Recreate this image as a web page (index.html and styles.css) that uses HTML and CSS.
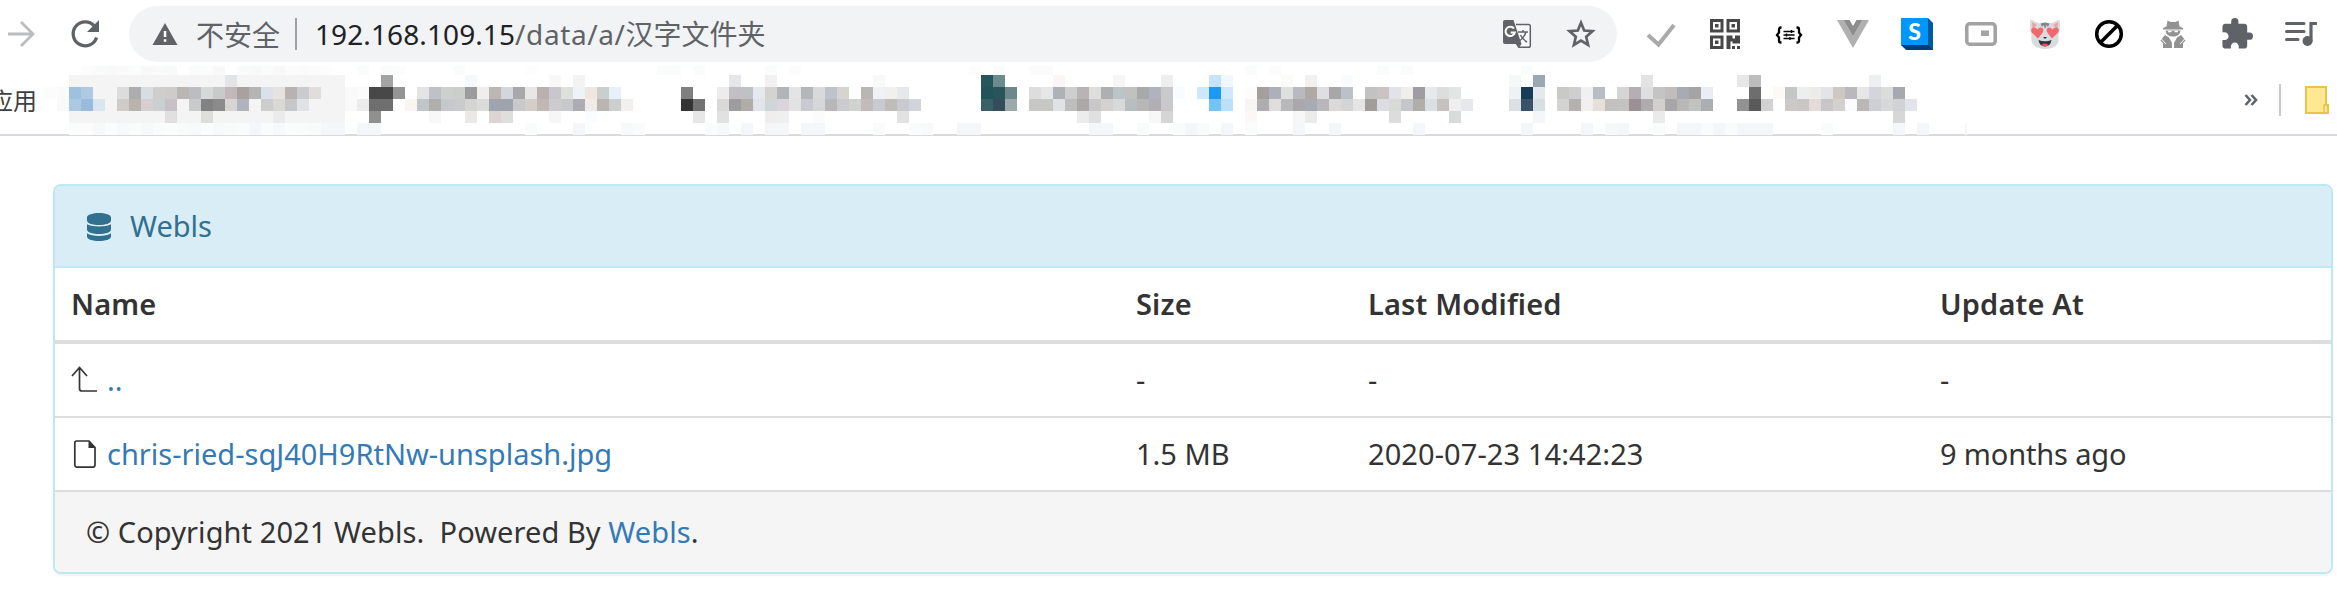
FILE: index.html
```html
<!DOCTYPE html>
<html lang="zh-CN">
<head>
<meta charset="utf-8">
<title>Webls</title>
<link rel="stylesheet" href="styles.css">
</head>
<body>
<header class="toolbar">
  <svg class="icon nav-forward" viewBox="0 0 32 32"><path d="M3 16H27M16 4L28 16L16 28" fill="none" stroke="#babcbe" stroke-width="2.8"/></svg>
  <svg class="icon nav-reload" viewBox="0 0 32 32"><path d="M25.6 8.4A12 12 0 1 0 27.6 19.5" fill="none" stroke="#5f6368" stroke-width="3.3"/><path d="M30 2V14H18Z" fill="#5f6368"/></svg>
  <div class="omnibox">
    <svg class="warn" viewBox="0 0 26 24"><path d="M13 1L25.5 23H.5Z" fill="#5f6368"/><path d="M11.8 9h2.5v6h-2.5zM11.8 17.2h2.5v2.6h-2.5z" fill="#fff"/></svg>
    <span class="insecure">不安全</span>
    <span class="divider"></span>
    <span class="url"><span class="host">192.168.109.15</span><span class="path">/data/a/</span>汉字文件夹</span>
    <svg class="icon translate" viewBox="0 0 32 32"><path d="M15 6.5H27.5Q29.3 6.5 29.3 8.300V27.500Q29.300 29.300 27.500 29.300H18L15 25" fill="#f8f9fa" stroke="#5f6368" stroke-width="1.500"/><path d="M4 2H12.500L20.500 26H4Q2 26 2 24V4Q2 2 4 2Z" fill="#5f6368"/><path d="M15.500 26H20.500L17.500 30Z" fill="#5f6368"/><path d="M13 10.500A4.700 4.700 0 1 0 13.800 14.500H9.700" fill="none" stroke="#fff" stroke-width="2"/><path d="M17 14H27M22 12V14M25 14Q23 20 18.500 23M19.500 17Q22 22 26 24" fill="none" stroke="#5f6368" stroke-width="1.500"/></svg>
    <svg class="icon" viewBox="0 0 32 32"><path d="M16 4.800L19.200 12.500L27.500 13.200L21.200 18.700L23.100 27L16 22.600L8.900 27L10.800 18.700L4.500 13.200L12.800 12.500Z" fill="none" stroke="#5f6368" stroke-width="2.700"/></svg>
  </div>
  <div class="extensions">
    <svg class="icon" viewBox="0 0 32 32"><path d="M3 17L13.500 26.500L29 7" fill="none" stroke="#a9a9a9" stroke-width="4"/></svg>
    <svg class="icon" viewBox="0 0 32 32"><path d="M2.500 2.500h10.500v10.500h-10.500zM19 2.500h10.500v10.500h-10.500zM2.500 19h10.500v10.500h-10.500z" fill="none" stroke="#484848" stroke-width="3"/><path d="M6 6h3.500v3.500h-3.500zM22.500 6h3.500v3.500h-3.500zM6 22.500h3.500v3.500h-3.500zM17.500 17.500h6v3h2.500v-3h5v8h-7.500v-2h-2v7.500h-4zM23 28h3v3h-3zM28 28h3v3h-3z" fill="#484848"/></svg>
    <svg class="icon" viewBox="0 0 32 32"><path d="M8.500 9.500H7.800Q6 9.500 6 11.500V14.500L4 17L6 19.500V22.500Q6 24.500 7.800 24.500H8.500M23.500 9.500H24.200Q26 9.500 26 11.500V14.500L28 17L26 19.500V22.500Q26 24.500 24.200 24.500H23.500" fill="none" stroke="#000" stroke-width="2.300"/><path d="M10.500 13.500H21.500M10.500 17H21.500M10.500 20.500H21.500M18.500 12V15M13.500 15.500V18.500M17 19V22" stroke="#000" stroke-width="1.400"/></svg>
    <svg class="icon" viewBox="0 0 32 32"><path d="M0 2H6.500L16 18.500L25.500 2H32L16 30Z" fill="#b0b0b0"/><path d="M6.500 2H12.500L16 8L19.500 2H25.500L16 18.500Z" fill="#8d8d8d"/></svg>
    <svg class="icon" viewBox="0 0 32 32"><path d="M27 0L32 5V32H5.500L0 27Z" fill="#005a9c"/><path d="M0 27L5.500 32H32L27 27Z" fill="#003d74"/><path d="M0 0H27V27H0Z" fill="#0096ff"/><text class="badge-letter" x="13.500" y="21.500" text-anchor="middle">S</text></svg>
    <svg class="icon" viewBox="0 0 32 32"><rect x="1.800" y="5.800" width="28.400" height="20.400" rx="3" fill="none" stroke="#a2a2a2" stroke-width="3.500"/><rect x="16" y="12.500" width="8" height="5.500" fill="#a2a2a2"/></svg>
    <svg class="icon" viewBox="0 0 32 32"><path d="M1.500 1.500L10.500 5.500Q16 3.500 21.500 5.500L30.500 1.500Q32 9 29.500 17Q31.500 31 16 31Q.5 31 2.500 17Q0 9 1.500 1.500Z" fill="#d9dcdf"/><path d="M3 4L8 7L3.500 11ZM29 4L24 7L28.500 11Z" fill="#f0a0a4"/><path d="M11.500 5.500L16 4.500L20.500 5.500L19 9L17.500 7L16 11L14.500 7L13 9Z" fill="#80868c"/><path d="M9 20.500L2.800 14.500Q.8 10.500 4.500 9.500Q7.200 9.200 8.500 11.500Q10.500 8.500 13.500 10Q15.500 12.500 13 15.500ZM23 20.500L29.200 14.500Q31.200 10.500 27.500 9.500Q24.800 9.200 23.500 11.500Q21.500 8.500 18.500 10Q16.500 12.500 19 15.500Z" fill="#f4676b"/><path d="M14 19H18L16 21Z" fill="#333"/><path d="M9.500 22Q16 24.500 22.500 22Q21.500 28.500 16 28.500Q10.500 28.500 9.500 22Z" fill="#34343b"/><path d="M12 27Q16 24 20 27Q16 29.500 12 27Z" fill="#f34d60"/></svg>
    <svg class="icon" viewBox="0 0 32 32"><circle cx="16" cy="16" r="12.300" fill="none" stroke="#000" stroke-width="3.500"/><path d="M7.500 24.500L24.500 7.500" stroke="#000" stroke-width="3.500"/></svg>
    <svg class="icon" viewBox="0 0 32 32"><path d="M10.500 2.500L13.500 4H18.500L21.500 2.500L22.500 8.500L26 10V11.500H6V10L9.500 8.500ZM8.500 12.500H23.500Q23 18.500 16 18.500Q9 18.500 8.500 12.500Z" fill="#929292"/><path d="M11 12.800h3.500v1.500h-3.500zM17.500 12.800h3.500v1.500h-3.500z" fill="#fff"/><path d="M8 17L12 19.500L15 25V30H6V25L3.500 22.500ZM24 17L20 19.500L17 25V30H26V25L28.500 22.500Z" fill="#929292"/><path d="M3.500 20L9 26M28.500 20L23 26" stroke="#fff"/></svg>
    <svg class="icon" viewBox="1 1 22 22"><path fill="#5f6368" d="M20.500 11H19V7c0-1.100-.9-2-2-2h-4V3.500a2.500 2.500 0 0 0-5 0V5H4c-1.100 0-1.990.9-1.990 2v3.800H3.500c1.490 0 2.700 1.210 2.700 2.700s-1.210 2.700-2.700 2.700H2V20c0 1.100.9 2 2 2h3.800v-1.500c0-1.490 1.210-2.700 2.700-2.700 1.490 0 2.700 1.210 2.700 2.700V22H17c1.100 0 2-.9 2-2v-4h1.500a2.500 2.500 0 0 0 0-5z"/></svg>
    <svg class="icon" viewBox="0 0 32 32"><path d="M1.500 5.500H19M1.500 13.500H19M1.500 21.500H13" stroke="#5f6368" stroke-width="3" stroke-linecap="round"/><path d="M31 5.500H26V23" fill="none" stroke="#5f6368" stroke-width="3.200" stroke-linecap="round"/><circle cx="22.500" cy="23" r="5" fill="#5f6368"/></svg>
  </div>
</header>
<nav class="bookmarks">
  <span class="apps">应用</span>
  <svg class="mosaic" id="mosaic" viewBox="45 66 1922 69" shape-rendering="crispEdges"></svg>
  <svg class="more" viewBox="0 0 14 12"><path d="M1.500 1L6 6L1.500 11M7.500 1L12 6L7.500 11" fill="none" stroke="#5f6368" stroke-width="2.600"/></svg>
  <span class="divider"></span>
  <svg class="folder" viewBox="0 0 24 28"><path d="M1 1H21V19H23V27H1Z" fill="#ffe793" stroke="#e8c548" stroke-width="2"/><path d="M19 27V19H22" fill="none" stroke="#e8c548" stroke-width="1.500"/></svg>
</nav>
<main class="panel">
  <div class="panel-heading">
    <svg class="database" viewBox="0 0 24 28"><path d="M0 4.500C0 -1.500 24 -1.500 24 4.500V7.500C24 13.500 0 13.500 0 7.500ZM0 11.300C5 14.300 19 14.300 24 11.300V16.500C24 22.500 0 22.500 0 16.500ZM0 20.300C5 23.900 19 23.900 24 20.300V23.500C24 29.500 0 29.500 0 23.500Z" fill="#31708f"/></svg>
    <span>Webls</span>
  </div>
  <table class="listing">
    <colgroup><col class="c-name"><col class="c-size"><col class="c-modified"><col></colgroup>
    <thead><tr><th>Name</th><th>Size</th><th>Last Modified</th><th>Update At</th></tr></thead>
    <tbody>
      <tr><td><div class="entry"><svg class="entry-icon" viewBox="0 0 28 28"><path d="M1 10L8.500 1.500L16 10M8.500 2V22.500Q8.500 25 11 25H26" fill="none" stroke="#333" stroke-width="1.700"/></svg><a href="#">..</a></div></td><td>-</td><td>-</td><td>-</td></tr>
      <tr><td><div class="entry"><svg class="entry-icon" viewBox="0 0 28 28"><path d="M5.500 1H18L24 7.500V25Q24 27.200 22 27.200H6Q3.800 27.200 3.800 25V3Q3.800 1 5.500 1Z" fill="none" stroke="#333" stroke-width="1.700"/><path d="M17.500 1V8H24.500Z" fill="#333"/></svg><a href="#">chris-ried-sqJ40H9RtNw-unsplash.jpg</a></div></td><td>1.5 MB</td><td class="date">2020-07-23 14:42:23</td><td class="ago">9 months ago</td></tr>
    </tbody>
  </table>
  <footer class="panel-footer"><span>© Copyright 2021 Webls.&nbsp; Powered By <a href="#">Webls</a>.</span></footer>
</main>
<script src="mosaic.js"></script>
</body>
</html>
```
FILE: styles.css
```css
* { box-sizing: border-box; }
body { margin: 0; height: 601px; overflow: hidden; background: #fff; color: #333; font: 29px/40px "Noto Sans", "Open Sans", "Noto Sans CJK SC", sans-serif; }
svg { display: block; flex: none; }
a { color: #337ab7; text-decoration: none; }
.icon { width: 32px; height: 32px; }
.toolbar { display: flex; align-items: center; height: 66px; padding: 2px 20px 0 5px; white-space: nowrap; }
.nav-reload { margin-left: 32px; }
.omnibox { display: flex; align-items: center; width: 1488px; height: 56px; margin-left: 28px; padding: 0 20px 0 23px; border-radius: 28px; background: #f1f3f5; color: #5f6368; font-size: 28px; }
.warn { width: 26px; height: 24px; }
.insecure { margin-left: 18px; width: 84px; font-family: "Noto Sans CJK SC", sans-serif; }
.divider { width: 2px; height: 32px; background: #9aa0a6; margin: 0 18px 0 15px; flex: none; }
.url { flex: 1; font-family: "Noto Sans", "Noto Sans CJK SC", sans-serif; }
.host { color: #202124; letter-spacing: .1px; }
.path { letter-spacing: .6px; }
.translate { margin-right: 32px; }
.extensions { display: flex; gap: 32px; margin-left: auto; }
.badge-letter { font: 900 23px Lato, sans-serif; fill: #fff; }
.bookmarks { display: flex; align-items: center; height: 70px; padding-right: 8px; border-bottom: 2px solid #dad9de; }
.apps { width: 48px; margin: 0 8px 0 -11px; color: #3c4043; font: 24px/36px "Noto Sans CJK SC", sans-serif; }
.mosaic { width: 1922px; height: 69px; align-self: flex-start; }
.more { width: 14px; height: 12px; margin-left: 277px; }
.bookmarks .divider { margin: 0 24px 0 21px; background: #c8c9cc; }
.folder { width: 24px; height: 28px; }
.panel { width: 2280px; margin: 48px 0 0 53px; border: 2px solid #bce8f1; border-radius: 8px; overflow: hidden; box-shadow: 0 2px 2px rgba(0, 0, 0, .05); }
.panel-heading { display: flex; align-items: center; gap: 19px; height: 82px; padding: 0 32px; border-bottom: 2px solid #bce8f1; background: #d9edf7; color: #31708f; }
.database { width: 24px; height: 28px; margin-top: 2px; }
.listing { width: 100%; table-layout: fixed; border-collapse: separate; border-spacing: 0; }
.c-name { width: 1065px; }
.c-size { width: 232px; }
.c-modified { width: 572px; }
th, td { height: 74px; padding: 0 16px; text-align: left; white-space: nowrap; border-bottom: 2px solid #ddd; }
th { height: 76px; border-bottom-width: 4px; font-weight: 600; letter-spacing: .15px; }
.date { letter-spacing: .08px; }
.ago { letter-spacing: -.15px; }
.entry { display: flex; align-items: center; gap: 8px; }
.entry-icon { width: 28px; height: 28px; }
.panel-footer { display: flex; align-items: center; height: 80px; padding: 0 31px; background: #f5f5f5; letter-spacing: .08px; }
```
FILE: mosaic.js
```js
// Pixelated bookmark labels. Each run is [row, first column, colours]; "-" leaves a cell empty.
const rowTop = [66, 75, 87, 99, 111, 123];
const rowHeight = [9, 12, 12, 12, 12, 12];
const runs = [
  [2, 3, "fcfcfc fafafa 9fc1df aec9e1 - - dcdcdd adacaf d8dde1 d0cecd cecccb bab6b5 bcbcc1 d7d8d8 cbcaca c0b8ba a8a19f b4b4b7 dce0e8 e7e2df b8b2b1 cacbd1 e1dddb - - f9f9f9 fbfbfb 484848 484848 949594 - e3e3e3 bfc1c6 cfd0cd cccdcd 9b9b9e f1edea bdb7b4 d3d6dc a8a8ab e7e7e6 bab0ad c8c7cb dfdfde f0f3f6 efe6e0 cbcece e7f1f9"],
  [3, 4, "f9f9f9 adc9e2 99bcdc dae6ef - cfcbc9 b9b3ae d6cecf cad0d0 c7c1c7 - c9cbca 838283 8c8b8b d6d5d4 b1b4be - cdcdce d8d8d5 c6c7c9 e1e2e6 - - - f9f9f9 ececec 6f6f6f 6f6f6f - faf5ef c0c4cb b1afab c5c8cd c8cacc d4d4d2 dadcd9 a0a3b0 9fa3ae c8c9cb d5cdc7 c1b7b3 ccccd0 c8c9cb acacb2 f0ebe6 bbb5b2 cdcfce f1f0ef"],
  [1, 18, "e3e4e6"], [1, 31, "a3a3a3"], [1, 38, "f6f8fb"], [1, 45, "f8f8f8 - f3f3f3"],
  [4, 13, "e1dfe0 - - dddddb"], [4, 22, "ebebeb"], [4, 30, "909090"], [4, 35, "f8f8f8 - - eae9e7 - dbd3d4 dfdede"], [4, 45, "f6f6f6 - - fbfcff"],
  [2, 56, "7f7f7f - - ececeb c2bfc3 bfc1c4 e5e8ee d6d2cd b1b5b8 e4e4e4 b5b6ba d9d9db c0c2c9 d5d4d1 - b9b6b4 eef1f5 f1f0ee e6e8ec"],
  [3, 56, "343434 727272 - d9d9d9 9f9c9f b1aca8 e1e4e9 d0d6d8 dad5dd e2e2e2 c8c9d1 d5d6d8 b8b6b8 c9cbd0 d1d3d1 c4babb c9cacf c0bcba c9cacf d1d5db"],
  [1, 60, "e5e6e9 - - f1f1f1"], [1, 72, "f9f9f9"],
  [4, 57, "e7e7e7 - e1e1e1 - - - efeeed efefef - - fbfbfb"], [4, 74, "e2e2e3"],
  [1, 81, "24565c 6a8c8d"], [1, 87, "fbf6f5 - - - - f6f6f4 - - - edeef0 - - - c5e4fb f1f7ff"],
  [2, 81, "23535a 295459 6c888a - dddddd e6e6e6 aeb2b7 cecdd0 b8b3b4 dededd aeafb1 bdc4c9 c1c1be a6a8a9 aeb3bd c9c9cc f8fbff - cde8fc 1a9af4 cfe8fb - fdfcfb a49e9d adafb9 dfdfdd b9babd afa9a5 dfdfe1 a7a7aa bcc1c7 - c2c2c2 c9c4c2 e1e3e9 f1edea a09da2 e7e9eb dcdddc e3e4e4 - - - - eff2f2 173c58 e5e9ee - c9c9c8 cfcfcf eef0f4 babcc3 - d5d5d5 b6afb1 dfdee0 c4c4c5 c1bdbc a9abb3 a5a3a4 e9eef5 - - - 6e6e6e - fcf9f6 c3c5c7 eeeeee ececeb e2e4e5 cdc8c0 bab8bd e6e6e6 d3d5db dadddb a8a9ae"],
  [3, 81, "395f68 354d5b 9daaac - c7c7c5 c7c7c5 dfe3e6 bebcbd aea7a7 c9c7c9 d5d1ce d7d9da b7bdc1 b8b7b6 b1afb3 c9c9cc - - - 74c2f6 bde0fa - f5f5f3 aeadb0 dedddb b9b9bb a8a8ad a9abb3 b8b8bc dbdad9 d5d5d5 e4e5e4 a19e99 dcdde2 d9d9d5 c4c6cb b1aeaa d9dfe4 c7c1c0 eeefee e6e8eb - - - dbe0e4 375269 d9e0e4 - d3d4d1 b5b1ae f0efed e6e0da c3c1c0 c4c3c2 9b9094 afacaf d2cfcc a8a6a8 bab8b7 c1c3be acadb3 - - 929292 5a5a5a d2d2d2 - cdc9c7 c9c6c5 e2dbd8 c8c6c8 d4d0d0 f9fbff bab7b6 cfcfd3 d7d8d9 cfd3d7 e1e5eb"],
  [4, 89, "ececec e0e0e0 - - - - f7f7f7 d5d5d5"], [4, 103, "faf7f6 - - - f7f7f7 ebebeb"],
  [4, 115, "dcdcdc - - - - d9dadc"], [4, 127, "f5f6f8"], [4, 137, "eaeaed"], [4, 157, "d7d7d7"],
  [1, 106, "fbfbf9 - f2f1f0 - - f9fbff"], [1, 125, "f6f8f7 - 9aa8b6"], [1, 136, "e3e3e3"], [1, 144, "e7e7e7 bdbdbd"], [1, 155, "eeeff1"],
  [0, 6, "fcfcfc f9fafa f8f8f8 fafafa fbfcfc f8f8f8 fafafa f8f9f9 - fafbfb fcfcfc f8f8f8 - f9fafa f8f8f8 fafcfc f8f8f8 fcfcfc fafafa fcfcfc fdfdfd"],
  [0, 29, "fafcfb - fafcfb fbfcfc"], [0, 37, "fafcfb"], [0, 43, "fdfdfd"], [0, 54, "fafcfb fafcfb - fafcfb"], [0, 63, "fafcfb - fcfcfc"],
  [0, 80, "fcfcfc - fafcfb - - fbfbfb fbfbfb"], [0, 103, "fafcfb - fcfcfc"], [0, 114, "fafcfb - fafcfb"], [0, 126, "fafcfb"],
  [5, 5, "fbfcfc fcfcfc f7f8fa fbfcfc f8f9fa fafbfb f7f8f9 fafbfb fbfcfc f9fafa f8f9fa fbfcfc f8f9fa f9fafa fafcfb f5f6f9 fafcfb f7f8fa fbfcfc fafcfb f9fafa f5f6f9 f5f6f9 - f5f6f9 f5f6f9"],
  [5, 43, "fafcfb - - - f5f6f9 - - - f7f9fa fafcfb"], [5, 58, "fafcfb f7f8fa - f5f6f9 - f5f6f9 f5f6f9 - f5f6f9 f5f6f9"], [5, 72, "fafcfb - - fafcfb f8f9fa"],
  [5, 79, "f5f6f9 f5f6f9"], [5, 90, "f5f6f9 f5f6f9 - - fafcfb - - fafcfb f5f6f9 f9fafa - f5f6f9"], [5, 103, "fafcfb"], [5, 107, "f5f6f9 - - f5f6f9"], [5, 117, "f5f6f9"],
  [5, 126, "f5f6f9"], [5, 131, "f5f6f9 - f7f8fa f5f6f9 - - fafcfb - f5f6f9 f5f6f9 fafcfb f5f6f9 fafcfb f5f6f9 f5f6f9 f5f6f9"],
  [5, 151, "fafcfb"], [5, 157, "f5f6f9 - f5f6f9"], [5, 163, "f5f6f9"]
];

const svg = document.getElementById("mosaic");
function block(x, y, width, height, fill) {
  const rect = document.createElementNS("http://www.w3.org/2000/svg", "rect");
  Object.entries({ x, y, width, height, fill }).forEach(([key, value]) => rect.setAttribute(key, value));
  svg.appendChild(rect);
}
block(69, 75, 276, 48, "#f4f4f4");
runs.forEach(([row, first, colours]) => {
  colours.split(" ").forEach((colour, i) => {
    if (colour !== "-") block(9 + 12 * (first + i), rowTop[row], 12, rowHeight[row], "#" + colour);
  });
});
```
